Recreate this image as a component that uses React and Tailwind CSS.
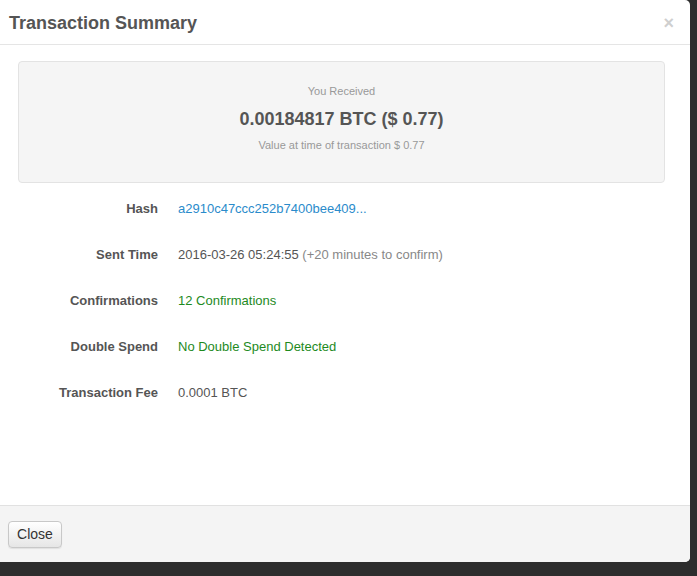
import React from "react";

const rows = [
  { label: "Hash", value: <span className="text-[#2a8bcb]">a2910c47ccc252b7400bee409...</span> },
  {
    label: "Sent Time",
    value: (
      <span className="text-[#555]">
        2016-03-26 05:24:55 <span className="text-[#888]">(+20 minutes to confirm)</span>
      </span>
    ),
  },
  { label: "Confirmations", value: <span className="text-[#1e8a1e]">12 Confirmations</span> },
  { label: "Double Spend", value: <span className="text-[#1e8a1e]">No Double Spend Detected</span> },
  { label: "Transaction Fee", value: <span className="text-[#555]">0.0001 BTC</span> },
];

export default function App() {
  return (
    <div
      className="w-[697px] h-[576px] bg-[#2d2d2d] overflow-hidden"
      style={{ fontFamily: '"Liberation Sans", Arial, sans-serif' }}
    >
      <div className="w-[690px] h-[562px] bg-white flex flex-col rounded-r-[5px] overflow-hidden">
        {/* Header */}
        <div className="h-[45px] shrink-0 border-b border-[#e5e5e5] flex items-center justify-between pl-[9px] pr-[16px] pt-[2px]">
          <h3 className="text-[18px] font-bold text-[#555] leading-none">Transaction Summary</h3>
          <span className="text-[#cfcfcf] text-[18px] font-bold leading-none">×</span>
        </div>

        {/* Body */}
        <div className="flex-1 pt-[16px]">
          <div className="ml-[18px] w-[647px] h-[122px] bg-[#f5f5f5] border border-[#e3e3e3] rounded-[4px] flex flex-col items-center pt-[22px]">
            <div className="text-[11px] text-[#999] leading-[14px]">You Received</div>
            <div className="text-[18px] font-bold text-[#555] leading-[20px] mt-[11px]">
              0.00184817 BTC ($ 0.77)
            </div>
            <div className="text-[11px] text-[#999] leading-[14px] mt-[9px]">
              Value at time of transaction $ 0.77
            </div>
          </div>

          <div className="mt-[3px]">
            {rows.map((r) => (
              <div key={r.label} className="flex items-center h-[46px] text-[13px]">
                <div className="w-[158px] text-right font-bold text-[#555]">{r.label}</div>
                <div className="pl-[20px]">{r.value}</div>
              </div>
            ))}
          </div>
        </div>

        {/* Footer */}
        <div className="h-[57px] shrink-0 border-t border-[#e1e1e1] bg-[#f4f4f4] flex items-center pl-[8px]">
          <button className="w-[54px] h-[27px] text-[14px] text-[#333] border border-[#c8c8c8] rounded-[4px] bg-gradient-to-b from-white to-[#e6e6e6] shadow-[0_1px_1px_rgba(0,0,0,0.08)]">
            Close
          </button>
        </div>
      </div>
    </div>
  );
}
